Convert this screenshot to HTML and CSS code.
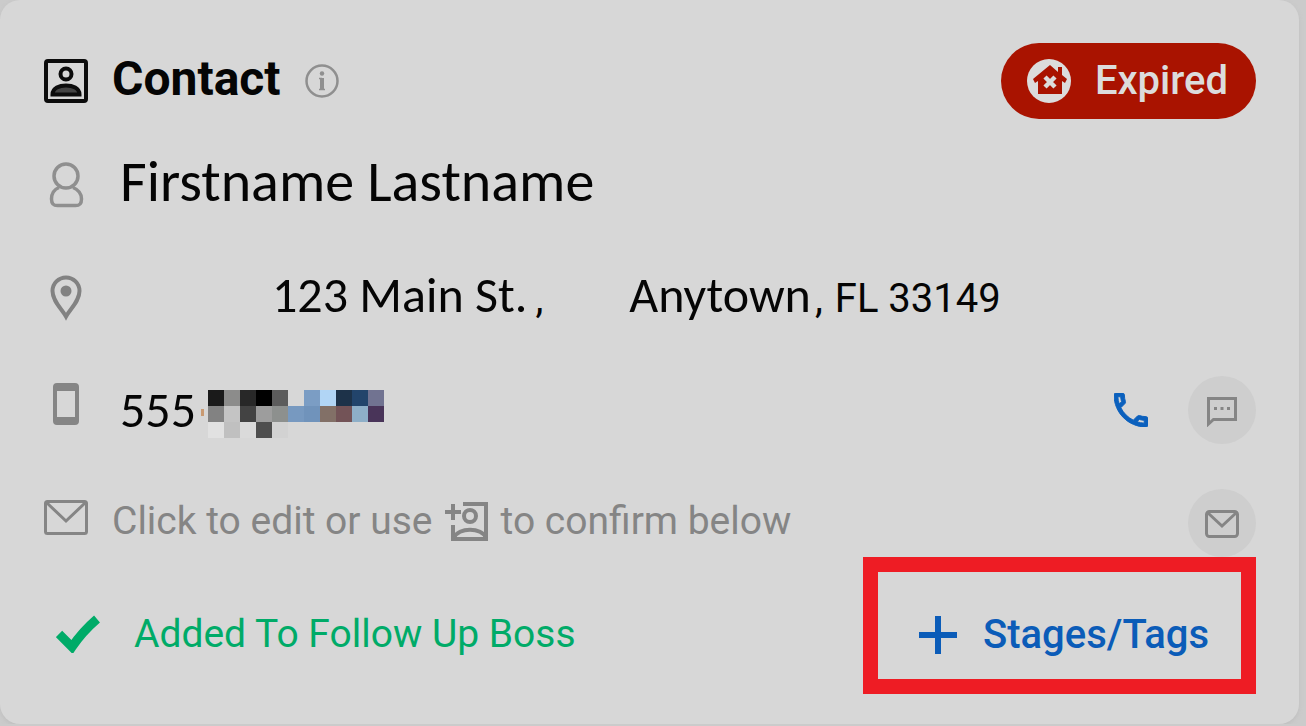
FILE: index.html
```
<!DOCTYPE html>
<html lang="en">
<head>
    <meta charset="UTF-8">
    <meta name="viewport" content="width=device-width, initial-scale=1.0">
    <title>Contact</title>
    <link rel="stylesheet" href="styles.css">
</head>
<body>
    <main class="card">
        <!-- Header -->
        <header class="card-header">
            <svg class="icon" viewBox="0 0 44 44" fill="none" stroke="#0c0c0c" stroke-width="4">
                <rect x="2" y="2" width="40" height="40" rx="2"/>
                <circle cx="22" cy="15" r="5.5"/>
                <path d="M8.500 35.500c0-6.500 7-9 13.500-9s13.500 2.500 13.500 9z" fill="#444"/>
            </svg>
            <h1>Contact</h1>
            <button class="info-button" aria-label="Info">
                <svg viewBox="0 0 34 34" fill="none" stroke="#8f8f8f" stroke-width="2.500">
                    <circle cx="17" cy="17" r="15.500"/>
                    <path d="M17 14v11" stroke-width="4"/>
                    <path d="M14 14.500h3M14 25.500h6" stroke-width="1.500"/>
                    <circle cx="17" cy="9.500" r="2.200" fill="#8f8f8f" stroke="none"/>
                </svg>
            </button>
            <span class="badge">
                <svg viewBox="0 0 44 44">
                    <circle cx="22" cy="22" r="22" fill="#dcdcdc"/>
                    <path d="M23 6 6 20l2 4 3-2v13h24V22l3 2 2-4-5-4V8h-4v5z" fill="#a91300"/>
                    <path d="m18 18 10 10M28 18 18 28" stroke="#dcdcdc" stroke-width="4.500"/>
                </svg>
                Expired
            </span>
        </header>

        <!-- Contact details -->
        <div class="details">
            <div class="row">
                <svg class="icon" viewBox="0 0 44 68" fill="none" stroke="#8f8f8f" stroke-width="3.500">
                    <circle cx="22" cy="26" r="12"/>
                    <path d="M15 37.500C9 40 7.500 44 7.500 49c0 5 2 6.500 6 6.500h18c4 0 6-1.500 6-6.500 0-5-2.500-9-8.500-11.500"/>
                </svg>
                <span class="value name">Firstname Lastname</span>
            </div>
            <div class="row">
                <svg class="icon" viewBox="0 0 44 68" fill="none" stroke="#828282" stroke-width="4">
                    <path d="M22 53.500C18 46 8.500 38.500 8.500 28a13.500 13.500 0 0 1 27 0C35.500 38.500 26 46 22 53.500z"/>
                    <circle cx="22" cy="28" r="5.500" fill="#828282" stroke="none"/>
                </svg>
                <address class="value address">
                    <span class="street">123 Main St.<span class="comma">,</span></span>
                    <span class="city">Anytown<span class="comma">,</span></span>
                    <span class="zip">FL 33149</span>
                </address>
            </div>
            <div class="row">
                <svg class="icon" viewBox="0 0 44 68" fill="#858585">
                    <path fill-rule="evenodd" d="M13 7h18q4 0 4 4v34q0 4-4 4H13q-4 0-4-4V11q0-4 4-4zm0 8v26h18V15z"/>
                </svg>
                <span class="value phone">555</span>
                <!-- Masked part of the number -->
                <svg class="mosaic" viewBox="0 0 188 48" shape-rendering="crispEdges">
                    <path fill="#c99a72" d="M5 19h3v7H5z"/>
                    <g transform="translate(12) scale(16)">
                        <path fill="#1a1a1a" d="M0 0h1v1H0z"/>
                        <path fill="#8c8c8b" d="M1 0h1v1H1z"/>
                        <path fill="#282828" d="M2 0h1v1H2z"/>
                        <path fill="#000" d="M3 0h1v1H3z"/>
                        <path fill="#5c5c5c" d="M4 0h1v1H4z"/>
                        <path fill="#7b9dc4" d="M6 0h1v1H6z"/>
                        <path fill="#b1d5f5" d="M7 0h1v1H7z"/>
                        <path fill="#1d3249" d="M8 0h1v1H8z"/>
                        <path fill="#22446b" d="M9 0h1v1H9z"/>
                        <path fill="#717391" d="M10 0h1v1h-1z"/>
                        <path fill="#828282" d="M0 1h1v1H0z"/>
                        <path fill="#c4c4c4" d="M1 1h1v1H1z"/>
                        <path fill="#434343" d="M2 1h1v1H2z"/>
                        <path fill="#9d9d9d" d="M3 1h1v1H3z"/>
                        <path fill="#8d908e" d="M4 1h1v1H4z"/>
                        <path fill="#7799c0" d="M5 1h1v1H5z"/>
                        <path fill="#7093bb" d="M6 1h1v1H6z"/>
                        <path fill="#827067" d="M7 1h1v1H7z"/>
                        <path fill="#735357" d="M8 1h1v1H8z"/>
                        <path fill="#8eafc8" d="M9 1h1v1H9z"/>
                        <path fill="#493459" d="M10 1h1v1h-1z"/>
                        <path fill="#e1e1e1" d="M0 2h1v1H0z"/>
                        <path fill="#c0c0c0" d="M1 2h1v1H1z"/>
                        <path fill="#dadada" d="M2 2h1v1H2z"/>
                        <path fill="#4e4e4e" d="M3 2h1v1H3z"/>
                        <path fill="#d2d2d2" d="M4 2h1v1H4z"/>
                    </g>
                </svg>
                <div class="actions">
                    <button class="call-button" aria-label="Call">
                        <svg viewBox="3 3 18 18" fill="#0b60bd" stroke="#0b60bd" stroke-width=".5">
                            <path d="M6.540 5c.06.890.210 1.760.450 2.590l-1.200 1.200c-.410-1.200-.670-2.470-.760-3.790h1.510m9.860 12.020c.850.240 1.720.390 2.600.450v1.490c-1.320-.090-2.590-.350-3.800-.750l1.200-1.190M7.500 3H4c-.550 0-1 .450-1 1 0 9.390 7.610 17 17 17 .550 0 1-.450 1-1v-3.490c0-.550-.450-1-1-1-1.240 0-2.450-.200-3.570-.570-.360-.120-.750-.020-1.020.240l-2.200 2.200c-2.830-1.450-5.150-3.760-6.590-6.590l2.200-2.200c.280-.280.360-.670.250-1.020C8.700 6.450 8.500 5.250 8.500 4c0-.550-.450-1-1-1z"/>
                        </svg>
                    </button>
                    <button class="round-button" aria-label="Text message">
                        <svg viewBox="0 0 34 34" fill="none" stroke="#858585" stroke-width="3">
                            <path d="M3.500 31V5.500h27v21h-22z"/>
                            <path d="M9 15.500h3m3.500 0h3m3.500 0h3"/>
                        </svg>
                    </button>
                </div>
            </div>
            <div class="row">
                <svg class="icon" viewBox="0 0 44 68" fill="none" stroke="#858585" stroke-width="3">
                    <rect x="1.500" y="12.500" width="41" height="32" rx="2"/>
                    <path d="m3 14 19 18 19-18"/>
                </svg>
                <button class="edit-button">
                    Click to edit or use
                    <svg viewBox="0 0 44 40" fill="none" stroke="#858585" stroke-width="4">
                        <path d="M18 3h23v35H8V24"/>
                        <path d="M0 11h16M8 3v16"/>
                        <circle cx="25" cy="15" r="6"/>
                        <path d="M9 37c4-11 28-11 32 0"/>
                    </svg>
                    to confirm below
                </button>
                <div class="actions">
                    <button class="round-button" aria-label="Email">
                        <svg viewBox="0 0 34 34" fill="none" stroke="#858585" stroke-width="3">
                            <rect x="1.500" y="5.500" width="31" height="25" rx="3"/>
                            <path d="m3 7 14 13L31 7"/>
                        </svg>
                    </button>
                </div>
            </div>
        </div>

        <!-- Footer -->
        <footer class="card-footer">
            <div class="status">
                <svg viewBox="0 0 44 38" fill="none" stroke="#00ab68" stroke-width="9">
                    <path d="m3 19 13 13Q26 17 41 4"/>
                </svg>
                Added To Follow Up Boss
            </div>
            <button class="tags-button">
                <svg viewBox="0 0 38 38" stroke="#0b5cb8" stroke-width="6">
                    <path d="M19 0v38M0 19h38"/>
                </svg>
                Stages/Tags
            </button>
        </footer>
    </main>
</body>
</html>
```
FILE: styles.css
```
* {
    box-sizing: border-box;
}
body {
    margin: 0;
    padding-right: 7px;
    background: #cbcbcb;
    font-family: Roboto, "Liberation Sans", sans-serif;
    font-size: 39px;
    line-height: 48px;
    color: #050505;
}
svg {
    display: block;
    flex: none;
}
button {
    border: none;
    padding: 0;
    background: none;
    font: inherit;
    color: inherit;
    cursor: pointer;
}
.card {
    padding: 43px 43px 30px 44px;
    border-radius: 20px;
    background: #d7d7d7;
    box-shadow: 0 2px 4px #bfbfbf;
    white-space: nowrap;
}
.card-header {
    display: flex;
    align-items: center;
    margin-bottom: 31px;
}
.icon {
    width: 44px;
    margin-right: 24px;
}
h1 {
    margin: 0;
    padding-bottom: 4px;
    font-size: 48px;
    font-weight: 700;
}
.info-button svg {
    width: 34px;
    margin-left: 24px;
}
.badge {
    display: flex;
    align-items: center;
    gap: 24px;
    height: 76px;
    margin-left: auto;
    padding: 0 28px 0 26px;
    border-radius: 38px;
    background: #a91300;
    color: #dcdcdc;
    font-size: 40px;
    font-weight: 500;
}
.badge svg {
    width: 44px;
}

/* Details */
.details {
    display: grid;
    gap: 45px;
}
.row {
    display: flex;
    align-items: center;
    height: 68px;
}
.value {
    padding-left: 8px;
    font-family: Carlito, Lato, sans-serif;
    font-size: 50px;
}
.name {
    padding-bottom: 4px;
    font-size: 58px;
}
.address {
    display: flex;
    align-items: baseline;
    padding-left: 160px;
    font-style: normal;
}
.comma,
.zip {
    font-family: Roboto, sans-serif;
    font-size: 40px;
}
.street .comma {
    margin-left: 8px;
}
.city {
    margin-left: 86px;
}
.city .comma {
    margin-left: 4px;
}
.zip {
    margin-left: 12px;
}
.mosaic {
    width: 188px;
    margin-top: 8px;
}
.actions {
    display: flex;
    align-items: center;
    gap: 40px;
    margin-left: auto;
}
.call-button svg {
    width: 34px;
}
.round-button {
    display: grid;
    place-items: center;
    width: 68px;
    height: 68px;
    border-radius: 50%;
    background: #cecece;
}
.round-button svg {
    width: 34px;
}
.edit-button {
    display: flex;
    align-items: center;
    gap: 12px;
    padding-bottom: 4px;
    color: #858585;
}
.edit-button svg {
    width: 44px;
}

/* Footer */
.card-footer {
    display: flex;
    align-items: center;
    justify-content: space-between;
}
.status {
    display: flex;
    align-items: center;
    gap: 34px;
    padding: 16px 0 0 12px;
    color: #00ab68;
}
.status svg {
    width: 44px;
}
.tags-button {
    display: flex;
    align-items: center;
    gap: 26px;
    height: 137px;
    padding: 18px 32px 0 41px;
    border: 15px solid #ee1c24;
    color: #0b5cb8;
    font-size: 40px;
    font-weight: 500;
}
.tags-button svg {
    width: 38px;
}
```
